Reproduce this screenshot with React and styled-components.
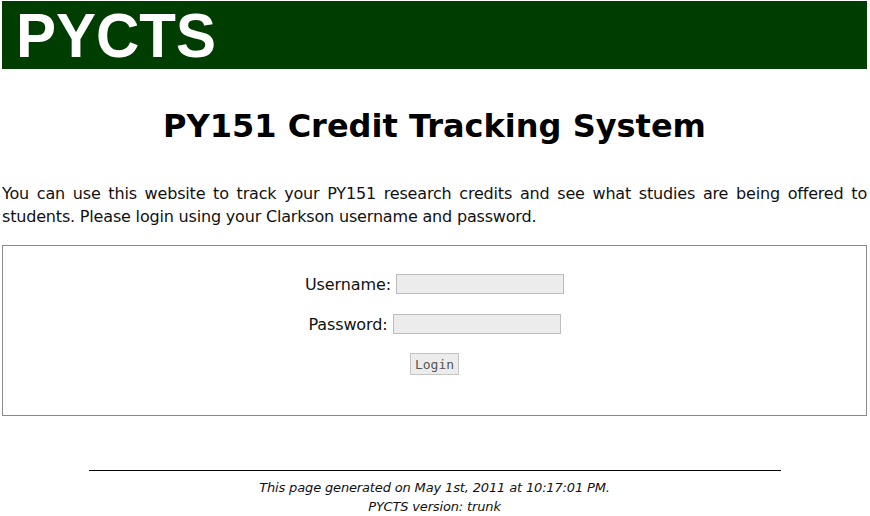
import React from "react";
import styled, { createGlobalStyle } from "styled-components";

const Global = createGlobalStyle`
  html, body { margin: 0; padding: 0; background: #fff; }
  body { font-family: "DejaVu Sans", sans-serif; color: #000; }
`;

const Page = styled.div`
  padding: 1px 3px 0 2px;
`;

const Header = styled.header`
  background: #003d00;
  height: 68px;
  display: flex;
  align-items: flex-start;
  padding: 4px 0 0 14px;
  box-sizing: border-box;
`;

const Logo = styled.div`
  font-family: "Liberation Sans", Arial, sans-serif;
  font-weight: bold;
  font-size: 60px;
  line-height: 60px;
  color: #fff;
  transform: scaleY(1.05);
  transform-origin: top left;
`;

const Title = styled.h1`
  font-family: "DejaVu Sans", sans-serif;
  font-weight: bold;
  font-size: 32px;
  line-height: 37px;
  text-align: center;
  margin: 39px 0 37px;
`;

const Intro = styled.p`
  font-size: 16px;
  line-height: 23px;
  letter-spacing: -0.18px;
  text-align: justify;
  color: #111;
  margin: 0 0 17px;
`;

const LoginBox = styled.form`
  border: 1px solid #8a8a8a;
  padding: 28px 0 40px;
  display: flex;
  flex-direction: column;
  align-items: center;
  gap: 20px;
`;

const Row = styled.div`
  display: flex;
  align-items: center;
  gap: 5px;
  height: 20px;
  font-size: 16px;
  letter-spacing: -0.1px;
  color: #111;
`;

const Input = styled.input`
  box-sizing: border-box;
  width: 168px;
  height: 20px;
  background: #ececec;
  border: 1px solid #bdbdbd;
  padding: 0 2px;
  margin: 0;
  outline: none;
`;

const Button = styled.button`
  box-sizing: border-box;
  width: 49px;
  height: 22px;
  margin-top: -1px;
  background: #ececec;
  border: 1px solid #c4c4c4;
  font-family: "DejaVu Sans Mono", monospace;
  font-size: 13px;
  color: #555;
  padding: 0;
`;

const Footer = styled.footer`
  margin-top: 54px;
  text-align: center;
  font-style: italic;
  font-size: 13px;
  line-height: 19px;
  letter-spacing: -0.15px;
  color: #111;
`;

const Rule = styled.hr`
  width: 80%;
  margin: 0 auto 7px;
  border: none;
  border-top: 1px solid #000;
  height: 0;
`;

export default function App() {
  return (
    <>
      <Global />
      <Page>
        <Header>
          <Logo>PYCTS</Logo>
        </Header>
        <Title>PY151 Credit Tracking System</Title>
        <Intro>
          You can use this website to track your PY151 research credits and see
          what studies are being offered to students. Please login using your
          Clarkson username and password.
        </Intro>
        <LoginBox onSubmit={(e) => e.preventDefault()}>
          <Row>
            <span>Username:</span>
            <Input type="text" />
          </Row>
          <Row>
            <span>Password:</span>
            <Input type="password" />
          </Row>
          <Button type="submit">Login</Button>
        </LoginBox>
        <Footer>
          <Rule />
          <div>This page generated on May 1st, 2011 at 10:17:01 PM.</div>
          <div>PYCTS version: trunk</div>
        </Footer>
      </Page>
    </>
  );
}
